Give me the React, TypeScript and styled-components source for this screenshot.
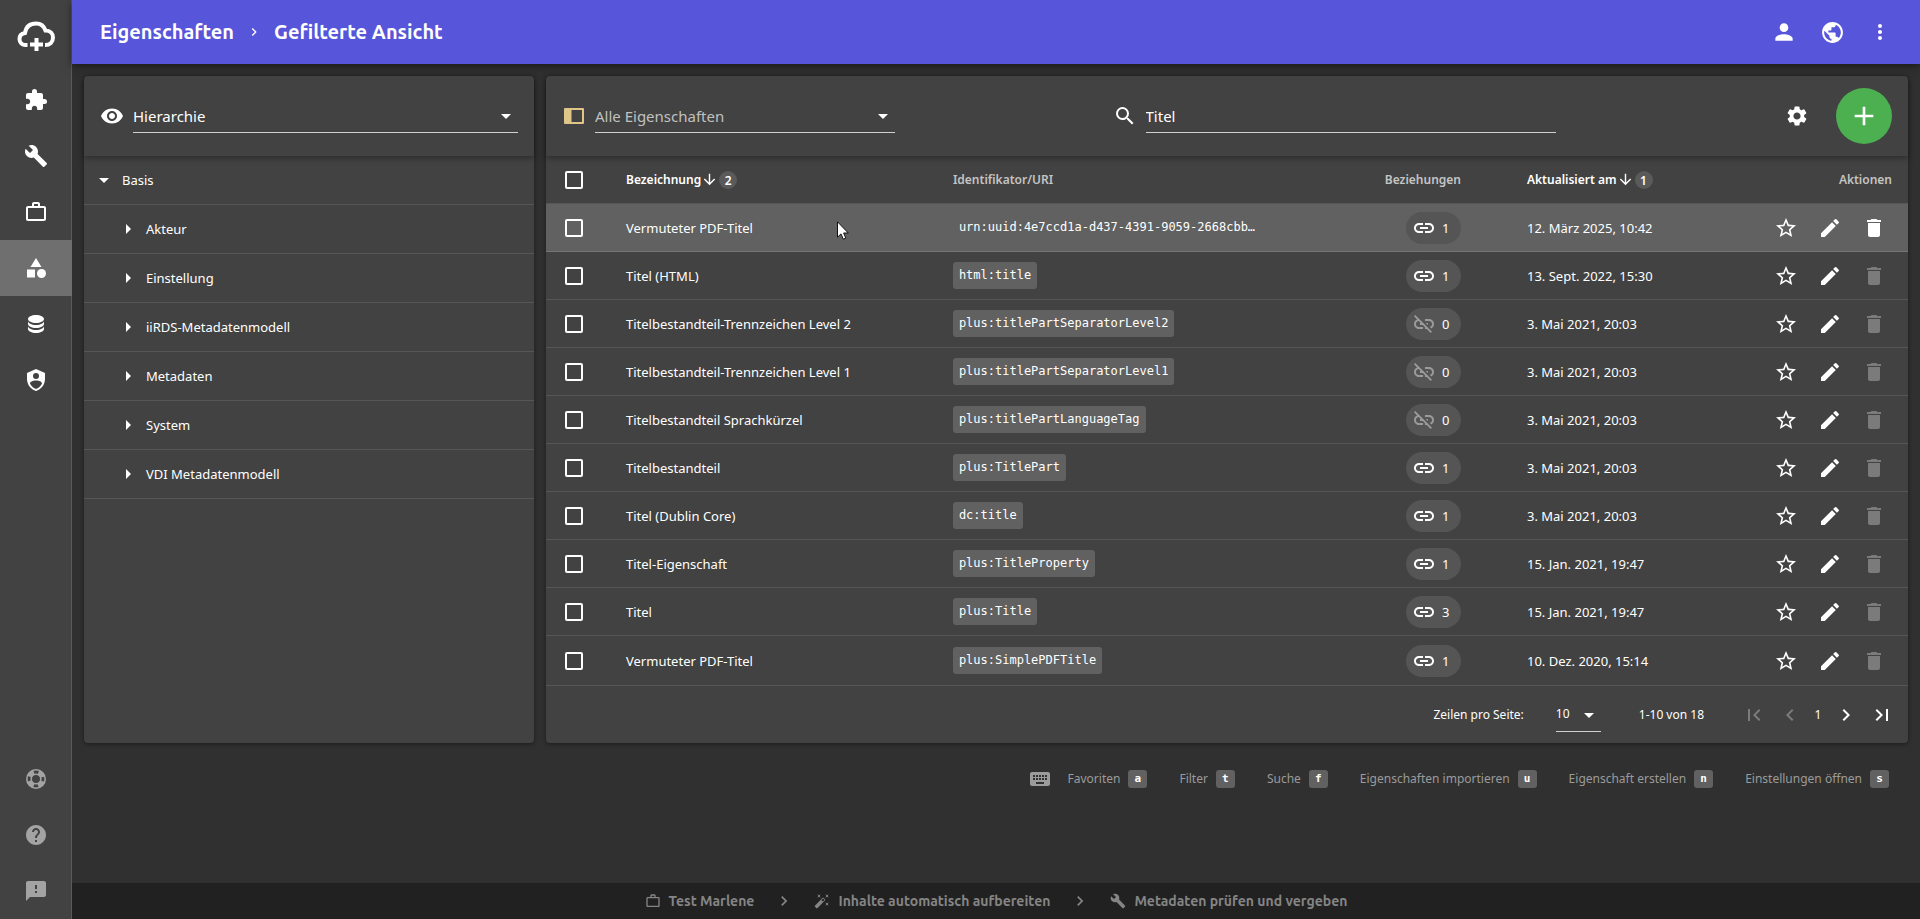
import React from "react";
import styled, { createGlobalStyle, css } from "styled-components";
import {
  MdExtension, MdBuild, MdWorkOutline, MdCategory, MdHelp, MdFeedback, MdPerson, MdPublic, MdMoreVert,
  MdRemoveRedEye, MdArrowDropDown, MdArrowRight, MdSearch, MdSettings, MdAdd, MdArrowDownward, MdLink,
  MdLinkOff, MdStarBorder, MdEdit, MdDelete, MdFirstPage, MdChevronLeft, MdChevronRight, MdLastPage, MdKeyboard,
} from "react-icons/md";

const sans = `"Segoe UI", "Noto Sans", "Open Sans", sans-serif`;
const brand = `Ubuntu, "Noto Sans", "Open Sans", sans-serif`;
const mono = `"DejaVu Sans Mono", monospace`;

const GlobalStyle = createGlobalStyle`
  *, *::before, *::after { box-sizing: border-box; }
  body { margin: 0; background: #303030; color: #fff; font: 13px/20px ${sans}; }
  button, input, select { font: inherit; color: inherit; }
  svg { display: block; flex: none; }
`;

const Shell = styled.div`
  display: flex;
  min-height: 100vh;
`;

const Rail = styled.nav`
  width: 72px;
  flex: none;
  display: flex;
  flex-direction: column;
  background: #424242;
  border-right: 1px solid #5a5a5a;
`;

const Logo = styled.a`
  display: grid;
  place-items: center;
  height: 72px;
  color: #fff;
`;

const RailLink = styled.a<{ $active?: boolean; $dim?: boolean }>`
  display: grid;
  place-items: center;
  height: 56px;
  margin-right: -1px;
  color: ${(p) => (p.$dim ? "#a3a3a3" : "#fff")};
  background: ${(p) => (p.$active ? "#6f6f6f" : "transparent")};
`;

const Spacer = styled.div`
  flex: 1;
`;

const Page = styled.div`
  flex: 1;
  min-width: 0;
  display: flex;
  flex-direction: column;
`;

const TopBar = styled.header`
  display: flex;
  align-items: center;
  height: 64px;
  padding: 0 16px 0 28px;
  background: #5755d9;
  box-shadow: 0 2px 8px rgba(0, 0, 0, 0.5);
`;

const Crumbs = styled.h1`
  display: flex;
  align-items: center;
  gap: 12px;
  flex: 1;
  margin: 0;
  font: 700 20px/28px ${brand};
`;

const IconButton = styled.button<{ $size?: number }>`
  display: grid;
  place-items: center;
  width: ${(p) => p.$size ?? 48}px;
  height: ${(p) => p.$size ?? 48}px;
  padding: 0;
  border: 0;
  border-radius: 50%;
  background: none;
  color: #fff;
  &:disabled { color: #7b7b7b; }
`;

const Content = styled.main`
  display: grid;
  grid-template-columns: 450px minmax(0, 1fr);
  gap: 12px;
  padding: 12px 12px 0;
`;

const Card = styled.section`
  display: flex;
  flex-direction: column;
  background: #424242;
  border-radius: 4px;
  box-shadow: 0 1px 4px rgba(0, 0, 0, 0.45);
`;

const CardBar = styled.div`
  display: flex;
  align-items: center;
  height: 80px;
  padding: 0 16px;
  border-radius: 4px 4px 0 0;
  box-shadow: 0 2px 6px rgba(0, 0, 0, 0.35);
`;

const Field = styled.label`
  display: flex;
  align-items: center;
  gap: 9px;
  flex: 1;
`;

const Line = styled.span`
  position: relative;
  display: flex;
  flex: 1;
  height: 34px;
  border-bottom: 1px solid #d0d0d0;
  & > svg {
    position: absolute;
    right: 0;
    top: 5px;
    pointer-events: none;
  }
`;

const control = css`
  width: 100%;
  padding: 0;
  border: 0;
  outline: 0;
  background: none;
  appearance: none;
`;

const Select = styled.select<{ $dim?: boolean; $small?: boolean }>`
  ${control}
  font-size: ${(p) => (p.$small ? 12 : 15)}px;
  color: ${(p) => (p.$dim ? "#c0c0c0" : "#fff")};
`;

const TextInput = styled.input`
  ${control}
  font-size: 15px;
`;

const Tree = styled.ul`
  list-style: none;
  margin: 0;
  padding: 0;
`;

const TreeRow = styled.li<{ $level: number }>`
  display: flex;
  align-items: center;
  height: 49px;
  padding-left: ${(p) => 8 + p.$level * 24}px;
  border-bottom: 1px solid #565656;
`;

const TreeButton = styled.button`
  display: flex;
  align-items: center;
  gap: 6px;
  padding: 0;
  border: 0;
  background: none;
`;

const Toolbar = styled(CardBar)`
  display: grid;
  grid-template-columns: 333px 443px auto;
  justify-content: space-between;
`;

const Tools = styled.div`
  display: flex;
  align-items: center;
  gap: 15px;
`;

const AddButton = styled(IconButton)`
  background: #4caf50;
`;

const Table = styled.table`
  width: 100%;
  table-layout: fixed;
  border-collapse: separate;
  border-spacing: 0;
`;

const Col = styled.col<{ $width?: string }>`
  width: ${(p) => p.$width ?? "auto"};
`;

const cell = css<{ $right?: boolean }>`
  height: 48px;
  padding: 0 ${(p) => (p.$right ? 50 : 0)}px 0 16px;
  text-align: ${(p) => (p.$right ? "right" : "left")};
  white-space: nowrap;
  border-bottom: 1px solid #565656;
  &:last-child { padding-right: 16px; }
`;

const Th = styled.th<{ $right?: boolean; $sorted?: boolean }>`
  ${cell}
  font-size: 12px;
  font-weight: 600;
  color: ${(p) => (p.$sorted ? "#fff" : "#c4c4c4")};
`;

const Sort = styled.span`
  display: flex;
  align-items: center;
`;

const Order = styled.span`
  display: grid;
  place-items: center;
  width: 18px;
  height: 18px;
  margin-left: 1px;
  border-radius: 50%;
  background: #5a5a5a;
`;

const Td = styled.td<{ $right?: boolean }>`
  ${cell}
`;

const Row = styled.tr<{ $hover?: boolean }>`
  background: ${(p) => (p.$hover ? "#616161" : "transparent")};
  ${(p) => p.$hover && css`${Td} { border-color: #757575; }`}
  &:last-child ${Td} { height: 50px; }
`;

const Check = styled.input`
  appearance: none;
  display: block;
  width: 18px;
  height: 18px;
  margin: 0 0 0 3px;
  border: 2px solid #fff;
  border-radius: 2px;
`;

const Code = styled.code`
  display: inline-block;
  padding: 3px 6px 4px;
  vertical-align: middle;
  border-radius: 3px;
  background: #616161;
  font: 12px/20px ${mono};
`;

const Chip = styled.span`
  display: inline-flex;
  align-items: center;
  gap: 6px;
  width: 55px;
  height: 32px;
  padding-left: 6px;
  vertical-align: middle;
  border-radius: 16px;
  background: #555;
`;

const Actions = styled.div`
  display: flex;
  justify-content: flex-end;
  margin-right: -4px;
`;

const Pager = styled.footer`
  display: flex;
  align-items: center;
  justify-content: flex-end;
  height: 57px;
  padding-right: 8px;
  font-size: 12px;
`;

const PageSize = styled.label`
  display: flex;
  align-items: center;
  gap: 32px;
  margin-right: 38px;
`;

const SizeLine = styled(Line)`
  flex: none;
  width: 45px;
`;

const PageNav = styled.nav`
  display: flex;
  align-items: center;
  margin-left: 32px;
`;

const Current = styled.span`
  width: 20px;
  text-align: center;
`;

const Shortcuts = styled.div`
  display: flex;
  align-items: center;
  justify-content: flex-end;
  gap: 16px;
  padding: 24px 31px;
  color: #9b9b9b;
  font-size: 12px;
`;

const ShortcutList = styled.div`
  display: flex;
  gap: 32px;
`;

const Shortcut = styled.span`
  display: flex;
  align-items: center;
  gap: 8px;
`;

const Key = styled.kbd`
  display: grid;
  place-items: center;
  width: 19px;
  height: 18px;
  border-radius: 3px;
  background: #616161;
  color: #fff;
  font: 700 11px/18px ${mono};
`;

const ProcessBar = styled.footer`
  display: flex;
  align-items: center;
  justify-content: center;
  gap: 20px;
  height: 36px;
  background: #212121;
  color: #858585;
  font: 700 14px/20px ${brand};
`;

const Step = styled.span`
  display: flex;
  align-items: center;
  gap: 8px;
`;

const Cursor = styled.svg`
  position: absolute;
  left: 837px;
  top: 221px;
`;

const Glyph = ({ d, size = 24 }: { d: string; size?: number }) => (
  <svg width={size} height={size} viewBox="0 0 24 24" fill="currentColor" aria-hidden="true"><path fillRule="evenodd" d={d} /></svg>
);

const DATABASE = "M12,3C7.58,3 4,4.79 4,7C4,9.21 7.58,11 12,11C16.42,11 20,9.21 20,7C20,4.79 16.42,3 12,3M4,9V12C4,14.21 7.58,16 12,16C16.42,16 20,14.21 20,12V9C20,11.21 16.42,13 12,13C7.58,13 4,11.21 4,9M4,14V17C4,19.21 7.58,21 12,21C16.42,21 20,19.21 20,17V14C20,16.21 16.42,18 12,18C7.58,18 4,16.21 4,14Z";
const SHIELD = "M12,1L3,5V11C3,16.55 6.84,21.74 12,23C17.16,21.74 21,16.55 21,11V5L12,1M12,5A3,3 0 0,1 15,8A3,3 0 0,1 12,11A3,3 0 0,1 9,8A3,3 0 0,1 12,5M17.13,17C15.92,18.85 14.11,20.24 12,20.92C9.89,20.24 8.08,18.85 6.87,17C6.53,16.5 6.24,16 6,15.47C6,13.82 8.71,12.47 12,12.47C15.29,12.47 18,13.79 18,15.47C17.76,16 17.47,16.5 17.13,17Z";
const WAND = "M7.5,5.6L5,7L6.4,4.5L5,2L7.5,3.4L10,2L8.6,4.5L10,7L7.5,5.6M19.5,15.4L22,14L20.6,16.5L22,19L19.5,17.6L17,19L18.4,16.5L17,14L19.5,15.4M22,2L20.6,4.5L22,7L19.5,5.6L17,7L18.4,4.5L17,2L19.5,3.4L22,2M13.34,12.78L15.78,10.34L13.66,8.22L11.22,10.66L13.34,12.78M14.37,7.29L16.71,9.63C17.1,10 17.1,10.65 16.71,11.04L5.04,22.71C4.65,23.1 4,23.1 3.63,22.71L1.29,20.37C0.9,20 0.9,19.35 1.29,18.96L12.96,7.29C13.35,6.9 14,6.9 14.37,7.29Z";

const CloudLogo = () => (
  <svg width="40" height="32" viewBox="0 0 40 32" fill="none" stroke="#fff" strokeWidth="4" aria-hidden="true">
    <path d="M11.500 25H9A6 6 0 0 1 3.500 19C3.500 15.500 6 13.500 9 13C10 7 14 3.500 20 3.500C25 3.500 28 6 29.500 10.500C34 10.500 37 13.500 37 17.500C37 22 34 25 29 25" />
    <path d="M20.500 18V31M14 24.500H27" />
  </svg>
);

const Lifebuoy = () => (
  <svg width="24" height="24" viewBox="0 0 24 24" fill="none" stroke="currentColor" aria-hidden="true">
    <circle cx="12" cy="12" r="9.2" strokeWidth="1.6" />
    <circle cx="12" cy="12" r="4.8" strokeWidth="1.6" />
    <circle cx="12" cy="12" r="7" strokeWidth="5" strokeDasharray="6.500 4.495" strokeDashoffset="-2.250" />
  </svg>
);

const PanelIcon = () => (
  <svg width="24" height="16" viewBox="-2 0 24 16" aria-hidden="true">
    <path fill="#e0c589" fillRule="evenodd" d="M1 0H19Q20 0 20 1V15Q20 16 19 16H1Q0 16 0 15V1Q0 0 1 0ZM7.500 2V14H18V2Z" />
  </svg>
);

const rows: [string, string, number, string][] = [
  ["Vermuteter PDF-Titel", "urn:uuid:4e7ccd1a-d437-4391-9059-2668cbb…", 1, "12. März 2025, 10:42"],
  ["Titel (HTML)", "html:title", 1, "13. Sept. 2022, 15:30"],
  ["Titelbestandteil-Trennzeichen Level 2", "plus:titlePartSeparatorLevel2", 0, "3. Mai 2021, 20:03"],
  ["Titelbestandteil-Trennzeichen Level 1", "plus:titlePartSeparatorLevel1", 0, "3. Mai 2021, 20:03"],
  ["Titelbestandteil Sprachkürzel", "plus:titlePartLanguageTag", 0, "3. Mai 2021, 20:03"],
  ["Titelbestandteil", "plus:TitlePart", 1, "3. Mai 2021, 20:03"],
  ["Titel (Dublin Core)", "dc:title", 1, "3. Mai 2021, 20:03"],
  ["Titel-Eigenschaft", "plus:TitleProperty", 1, "15. Jan. 2021, 19:47"],
  ["Titel", "plus:Title", 3, "15. Jan. 2021, 19:47"],
  ["Vermuteter PDF-Titel", "plus:SimplePDFTitle", 1, "10. Dez. 2020, 15:14"],
];

const tree = ["Akteur", "Einstellung", "iiRDS-Metadatenmodell", "Metadaten", "System", "VDI Metadatenmodell"];

const shortcuts = [
  ["Favoriten", "a"], ["Filter", "t"], ["Suche", "f"],
  ["Eigenschaften importieren", "u"], ["Eigenschaft erstellen", "n"], ["Einstellungen öffnen", "s"],
];

export default function App() {
  return (
    <Shell>
      <GlobalStyle />
      <Rail aria-label="Hauptnavigation">
        <Logo href="#" aria-label="Startseite"><CloudLogo /></Logo>
        <RailLink href="#" aria-label="Erweiterungen"><MdExtension size={24} /></RailLink>
        <RailLink href="#" aria-label="Werkzeuge"><MdBuild size={24} /></RailLink>
        <RailLink href="#" aria-label="Projekte"><MdWorkOutline size={24} /></RailLink>
        <RailLink href="#" aria-label="Eigenschaften" $active><MdCategory size={24} /></RailLink>
        <RailLink href="#" aria-label="Daten"><Glyph d={DATABASE} /></RailLink>
        <RailLink href="#" aria-label="Rechte"><Glyph d={SHIELD} /></RailLink>
        <Spacer />
        <RailLink href="#" aria-label="Support" $dim><Lifebuoy /></RailLink>
        <RailLink href="#" aria-label="Hilfe" $dim><MdHelp size={24} /></RailLink>
        <RailLink href="#" aria-label="Feedback" $dim><MdFeedback size={24} /></RailLink>
      </Rail>
      <Page>
        <TopBar>
          <Crumbs><span>Eigenschaften</span><MdChevronRight size={16} /><span>Gefilterte Ansicht</span></Crumbs>
          <IconButton aria-label="Konto"><MdPerson size={26} /></IconButton>
          <IconButton aria-label="Sprache"><MdPublic size={25} /></IconButton>
          <IconButton aria-label="Mehr"><MdMoreVert size={24} /></IconButton>
        </TopBar>
        <Content>
          <Card>
            <CardBar>
              <Field>
                <MdRemoveRedEye size={24} />
                <Line>
                  <Select aria-label="Ansicht"><option>Hierarchie</option></Select>
                  <MdArrowDropDown size={24} />
                </Line>
              </Field>
            </CardBar>
            <Tree>
              <TreeRow $level={0}><TreeButton><MdArrowDropDown size={24} />Basis</TreeButton></TreeRow>
              {tree.map((name) => (
                <TreeRow key={name} $level={1}><TreeButton><MdArrowRight size={24} />{name}</TreeButton></TreeRow>
              ))}
            </Tree>
          </Card>
          <Card>
            <Toolbar>
              <Field>
                <PanelIcon />
                <Line>
                  <Select $dim aria-label="Filter"><option>Alle Eigenschaften</option></Select>
                  <MdArrowDropDown size={24} />
                </Line>
              </Field>
              <Field>
                <MdSearch size={24} />
                <Line><TextInput aria-label="Suche" defaultValue="Titel" /></Line>
              </Field>
              <Tools>
                <IconButton aria-label="Einstellungen"><MdSettings size={24} /></IconButton>
                <AddButton $size={56} aria-label="Eigenschaft erstellen"><MdAdd size={32} /></AddButton>
              </Tools>
            </Toolbar>
            <Table>
              <colgroup>
                <Col $width="64px" /><Col $width="24%" /><Col $width="26%" />
                <Col $width="220px" /><Col /><Col $width="200px" />
              </colgroup>
              <thead>
                <tr>
                  <Th><Check type="checkbox" aria-label="Alle auswählen" /></Th>
                  <Th $sorted><Sort>Bezeichnung<MdArrowDownward size={17} /><Order>2</Order></Sort></Th>
                  <Th>Identifikator/URI</Th>
                  <Th $right>Beziehungen</Th>
                  <Th $sorted><Sort>Aktualisiert am<MdArrowDownward size={17} /><Order>1</Order></Sort></Th>
                  <Th $right>Aktionen</Th>
                </tr>
              </thead>
              <tbody>
                {rows.map(([name, id, links, date], i) => (
                  <Row key={id} $hover={i === 0}>
                    <Td><Check type="checkbox" aria-label={name} /></Td>
                    <Td>{name}</Td>
                    <Td><Code>{id}</Code></Td>
                    <Td $right><Chip>{links ? <MdLink size={24} /> : <MdLinkOff size={24} color="#9b9b9b" />}{links}</Chip></Td>
                    <Td>{date}</Td>
                    <Td>
                      <Actions>
                        <IconButton $size={44} aria-label="Favorit"><MdStarBorder size={24} /></IconButton>
                        <IconButton $size={44} aria-label="Bearbeiten"><MdEdit size={24} /></IconButton>
                        <IconButton $size={44} aria-label="Löschen" disabled={i > 0}><MdDelete size={24} /></IconButton>
                      </Actions>
                    </Td>
                  </Row>
                ))}
              </tbody>
            </Table>
            <Pager>
              <PageSize>Zeilen pro Seite:
                <SizeLine>
                  <Select $small><option>10</option></Select>
                  <MdArrowDropDown size={24} />
                </SizeLine>
              </PageSize>
              <span>1-10 von 18</span>
              <PageNav aria-label="Seiten">
                <IconButton $size={36} aria-label="Erste Seite" disabled><MdFirstPage size={24} /></IconButton>
                <IconButton $size={36} aria-label="Vorherige Seite" disabled><MdChevronLeft size={24} /></IconButton>
                <Current>1</Current>
                <IconButton $size={36} aria-label="Nächste Seite"><MdChevronRight size={24} /></IconButton>
                <IconButton $size={36} aria-label="Letzte Seite"><MdLastPage size={24} /></IconButton>
              </PageNav>
            </Pager>
          </Card>
        </Content>
        <Shortcuts>
          <MdKeyboard size={24} />
          <ShortcutList>
            {shortcuts.map(([label, key]) => <Shortcut key={key}>{label}<Key>{key}</Key></Shortcut>)}
          </ShortcutList>
        </Shortcuts>
        <Spacer />
        <ProcessBar>
          <Step><MdWorkOutline size={16} />Test Marlene</Step>
          <MdChevronRight size={20} />
          <Step><Glyph d={WAND} size={16} />Inhalte automatisch aufbereiten</Step>
          <MdChevronRight size={20} />
          <Step><MdBuild size={16} />Metadaten prüfen und vergeben</Step>
        </ProcessBar>
      </Page>
      <Cursor width="12" height="19" viewBox="0 0 12 19" aria-hidden="true">
        <path d="M.5 .8V16.200L4 12.900L6.300 18.200L8.800 17.100L6.600 12H11.300Z" fill="#fff" stroke="#111" />
      </Cursor>
    </Shell>
  );
}
